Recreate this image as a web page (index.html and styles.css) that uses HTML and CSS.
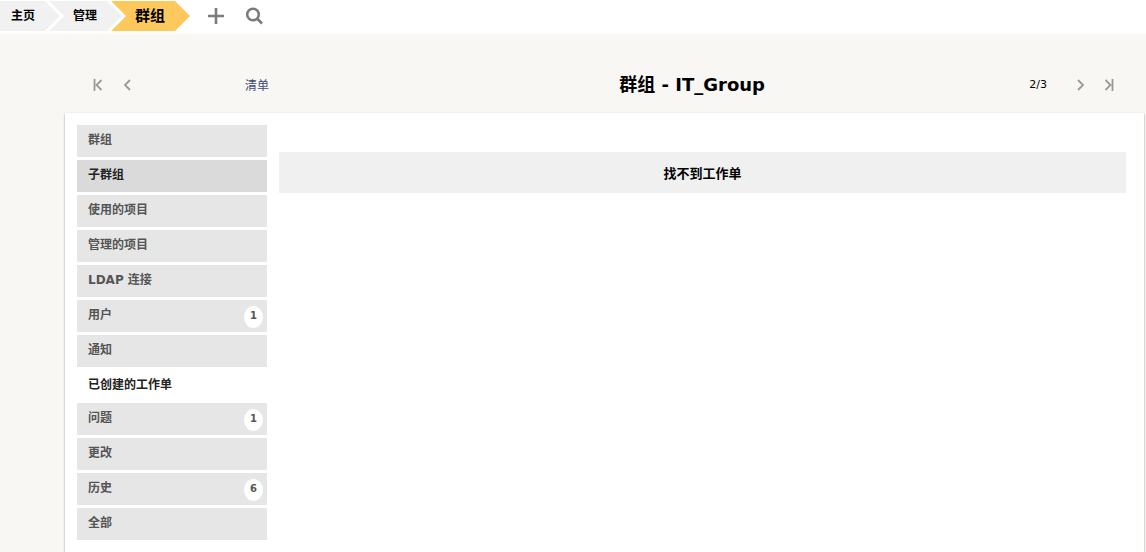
FILE: index.html
```html
<!DOCTYPE html>
<html lang="zh-CN">
<head>
    <meta charset="UTF-8">
    <meta name="viewport" content="width=device-width, initial-scale=1.0">
    <title>群组 - IT_Group</title>
    <link rel="stylesheet" href="styles.css">
</head>
<body>
    <nav class="topbar">
        <a href="#" class="crumb first">主页</a>
        <a href="#" class="crumb middle">管理</a>
        <a href="#" class="crumb current">群组</a>
        <button type="button" class="icon-button add" aria-label="添加">
            <svg width="18" height="18" viewBox="0 0 18 18"><path d="M9 1v16M1 9h16"/></svg>
        </button>
        <button type="button" class="icon-button" aria-label="搜索">
            <svg width="18" height="18" viewBox="0 0 18 18"><circle cx="8" cy="7.5" r="5.8"/><path d="M12 11.5l5 5"/></svg>
        </button>
    </nav>

    <main class="page">
        <header class="record-header">
            <div class="pager">
                <a href="#" aria-label="第一个"><svg width="12" height="12" viewBox="0 0 12 12"><path d="M2.5 0v12M9.5 1l-5 5 5 5"/></svg></a>
                <a href="#" aria-label="上一个"><svg width="12" height="12" viewBox="0 0 12 12"><path d="M9 1L4 6l5 5"/></svg></a>
            </div>
            <a href="#" class="list-link">清单</a>
            <h1>群组 - IT_Group</h1>
            <span class="position">2/3</span>
            <div class="pager next">
                <a href="#" aria-label="下一个"><svg width="12" height="12" viewBox="0 0 12 12"><path d="M3 1l5 5-5 5"/></svg></a>
                <a href="#" aria-label="最后一个"><svg width="12" height="12" viewBox="0 0 12 12"><path d="M2.5 1l5 5-5 5M9.5 0v12"/></svg></a>
            </div>
        </header>

        <div class="panel">
            <ul class="tabs">
                <li><a href="#">群组</a></li>
                <li class="hover"><a href="#">子群组</a></li>
                <li><a href="#">使用的项目</a></li>
                <li><a href="#">管理的项目</a></li>
                <li><a href="#">LDAP 连接</a></li>
                <li><a href="#">用户 <span class="badge">1</span></a></li>
                <li><a href="#">通知</a></li>
                <li class="active"><a href="#">已创建的工作单</a></li>
                <li><a href="#">问题 <span class="badge">1</span></a></li>
                <li><a href="#">更改</a></li>
                <li><a href="#">历史 <span class="badge">6</span></a></li>
                <li><a href="#">全部</a></li>
            </ul>
            <section class="content">
                <table>
                    <tr>
                        <th>找不到工作单</th>
                    </tr>
                </table>
            </section>
        </div>
    </main>
</body>
</html>
```
FILE: styles.css
```css
* {
    box-sizing: border-box;
}
body {
    font-family: Verdana, "DejaVu Sans", "Noto Sans CJK SC", sans-serif;
    font-size: 12px;
    margin: 0;
    min-height: 100vh;
    display: flex;
    flex-direction: column;
    background-color: #f8f7f3;
    color: #000;
}
a {
    color: inherit;
    text-decoration: none;
}
svg {
    display: block;
    fill: none;
    stroke: #999;
    stroke-width: 1.8;
}

/* Breadcrumb */
.topbar {
    display: flex;
    height: 34px;
    padding-top: 1px;
    background-color: #fff;
}
.crumb {
    height: 30px;
    line-height: 30px;
    font-weight: bold;
    background-color: #f1f1f1;
    clip-path: polygon(0 0, calc(100% - 15px) 0, 100% 50%, calc(100% - 15px) 100%, 0 100%, 15px 50%);
}
.crumb.first {
    padding: 0 25px 0 11px;
    clip-path: polygon(0 0, calc(100% - 15px) 0, 100% 50%, calc(100% - 15px) 100%, 0 100%);
}
.crumb.middle {
    margin-left: -11px;
    padding: 0 25px 0 24px;
}
.crumb.current {
    margin-left: -11px;
    padding: 0 25px 0 24px;
    font-size: 15px;
    background-color: #fec95c;
}
.icon-button {
    align-self: flex-start;
    margin: 6px 0 0 20px;
    padding: 0;
    border: 0;
    background: none;
    cursor: pointer;
}
.icon-button.add {
    margin-left: 17px;
}
.icon-button svg {
    stroke: #7b7b7b;
    stroke-width: 2.6;
}

/* Record header */
.page {
    flex: 1;
    display: flex;
    flex-direction: column;
    padding: 22px 2px 0 65px;
}
.record-header {
    display: flex;
    align-items: center;
    height: 57px;
    padding: 0 29px 0 27px;
}
.pager {
    display: flex;
    gap: 17px;
}
.pager.next {
    gap: 16px;
    margin-left: 28px;
}
.list-link {
    margin-left: 112px;
    color: #3b4a80;
}
h1 {
    flex: 1;
    margin: 0;
    padding-left: 86px;
    font-size: 18px;
    line-height: 20px;
    text-align: center;
}
.position {
    font-size: 11px;
}

/* Panel */
.panel {
    flex: 1;
    display: flex;
    gap: 12px;
    padding: 12px 18px 12px 12px;
    background-color: #fff;
    box-shadow: 0 1px 2px rgba(0, 0, 0, 0.4);
}
.tabs {
    width: 190px;
    margin: 0;
    padding: 0;
    list-style: none;
}
.tabs li {
    height: 32px;
    margin-bottom: 3px;
    background-color: #e6e6e6;
    color: #555;
    font-weight: bold;
}
.tabs a {
    display: flex;
    justify-content: space-between;
    height: 100%;
    padding: 0 4px 0 11px;
    line-height: 30px;
}
.tabs .hover {
    background-color: #dadada;
    color: #222;
}
.tabs .active {
    height: 33px;
    margin-bottom: 0;
    background-color: #fff;
    color: #222;
}
.badge {
    width: 19px;
    height: 22px;
    margin-top: 6px;
    border-radius: 50%;
    background-color: #fff;
    font-size: 10px;
    line-height: 20px;
    text-align: center;
}
.content {
    flex: 1;
    padding-top: 27px;
}
table {
    width: 100%;
    border-collapse: collapse;
}
th {
    height: 41px;
    padding: 0;
    background-color: #f0f0f0;
    font-size: 13px;
}
```
